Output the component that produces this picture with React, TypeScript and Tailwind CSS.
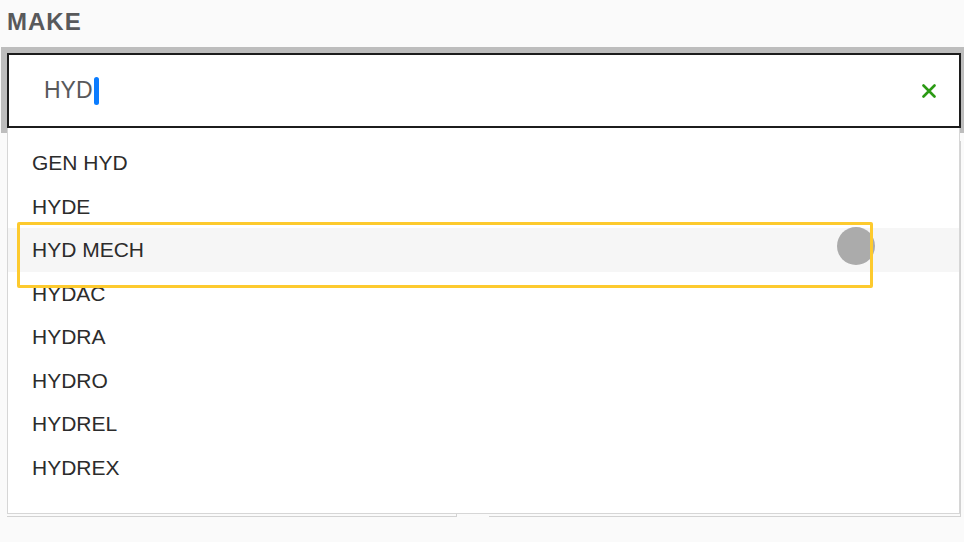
import React from "react";

const makes = ["GEN HYD", "HYDE", "HYD MECH", "HYDAC", "HYDRA", "HYDRO", "HYDREL", "HYDREX"];

function ClearIcon() {
  return (
    <svg width="14" height="14" viewBox="0 0 14 14" fill="none" aria-hidden="true">
      <path d="M1.5 1.5L12.5 12.5M12.5 1.5L1.5 12.5" stroke="#2b9a14" strokeWidth="2.6" strokeLinecap="round" />
    </svg>
  );
}

export default function App() {
  const active = "HYD MECH";

  return (
    <div
      className="h-[542px] w-[964px] overflow-hidden bg-[#fafafa]"
      style={{ fontFamily: '"Liberation Sans", Arial, sans-serif' }}
    >
      <div className="h-[47px] pl-[7px] pt-[10px]">
        <p className="text-[24px] font-bold leading-none tracking-[1px] text-[#58595b]">MAKE</p>
      </div>

      <div className="relative">
        <div className="ml-px bg-[#bdbdbd] pb-[5px] pl-[6px] pr-[3px] pt-[6px]">
          <div className="flex h-[75px] items-center border-2 border-[#1c1c1c] bg-white pl-[35px] pr-[23px]">
            <span className="text-[23px] leading-none text-[#58595b]">HYD</span>
            <span className="ml-px h-[28px] w-[5px] rounded-full bg-[#0a7cff]" />
            <button type="button" aria-label="Clear" className="ml-auto flex h-[14px] w-[14px] items-center justify-center">
              <ClearIcon />
            </button>
          </div>
        </div>

        {/* form fields underneath the open list */}
        <div className="flex gap-[32px] pl-[7px] pr-[3px] pt-[8px]">
          <div className="h-[376px] w-[450px] border-b-[1.5px] border-r-[1.5px] border-[#d2d2d2]" />
          <div className="h-[376px] flex-1 border-b-[1.5px] border-r-[1.5px] border-[#d2d2d2]" />
        </div>

        <div className="absolute left-[7px] top-[81px] z-10 h-[386px] w-[953px] border-b-[1.5px] border-l-[1.5px] border-r-[1.5px] border-[#d6d6d6] bg-white pt-[13px]">
          <ul>
            {makes.map((make) => (
              <li
                key={make}
                className={`flex h-[43.5px] items-center pl-[24px] text-[21px] leading-none text-[#2c2c2c] ${
                  make === active ? "bg-[#f6f6f6]" : ""
                }`}
              >
                {make}
              </li>
            ))}
          </ul>

          <div className="absolute left-[829px] top-[99px] h-[38px] w-[38px] rounded-full bg-[#ababab]" />
          <div className="absolute left-[9px] top-[94px] h-[66px] w-[856px] rounded-[2px] border-[3px] border-[#fdca2e]" />
        </div>
      </div>
    </div>
  );
}
